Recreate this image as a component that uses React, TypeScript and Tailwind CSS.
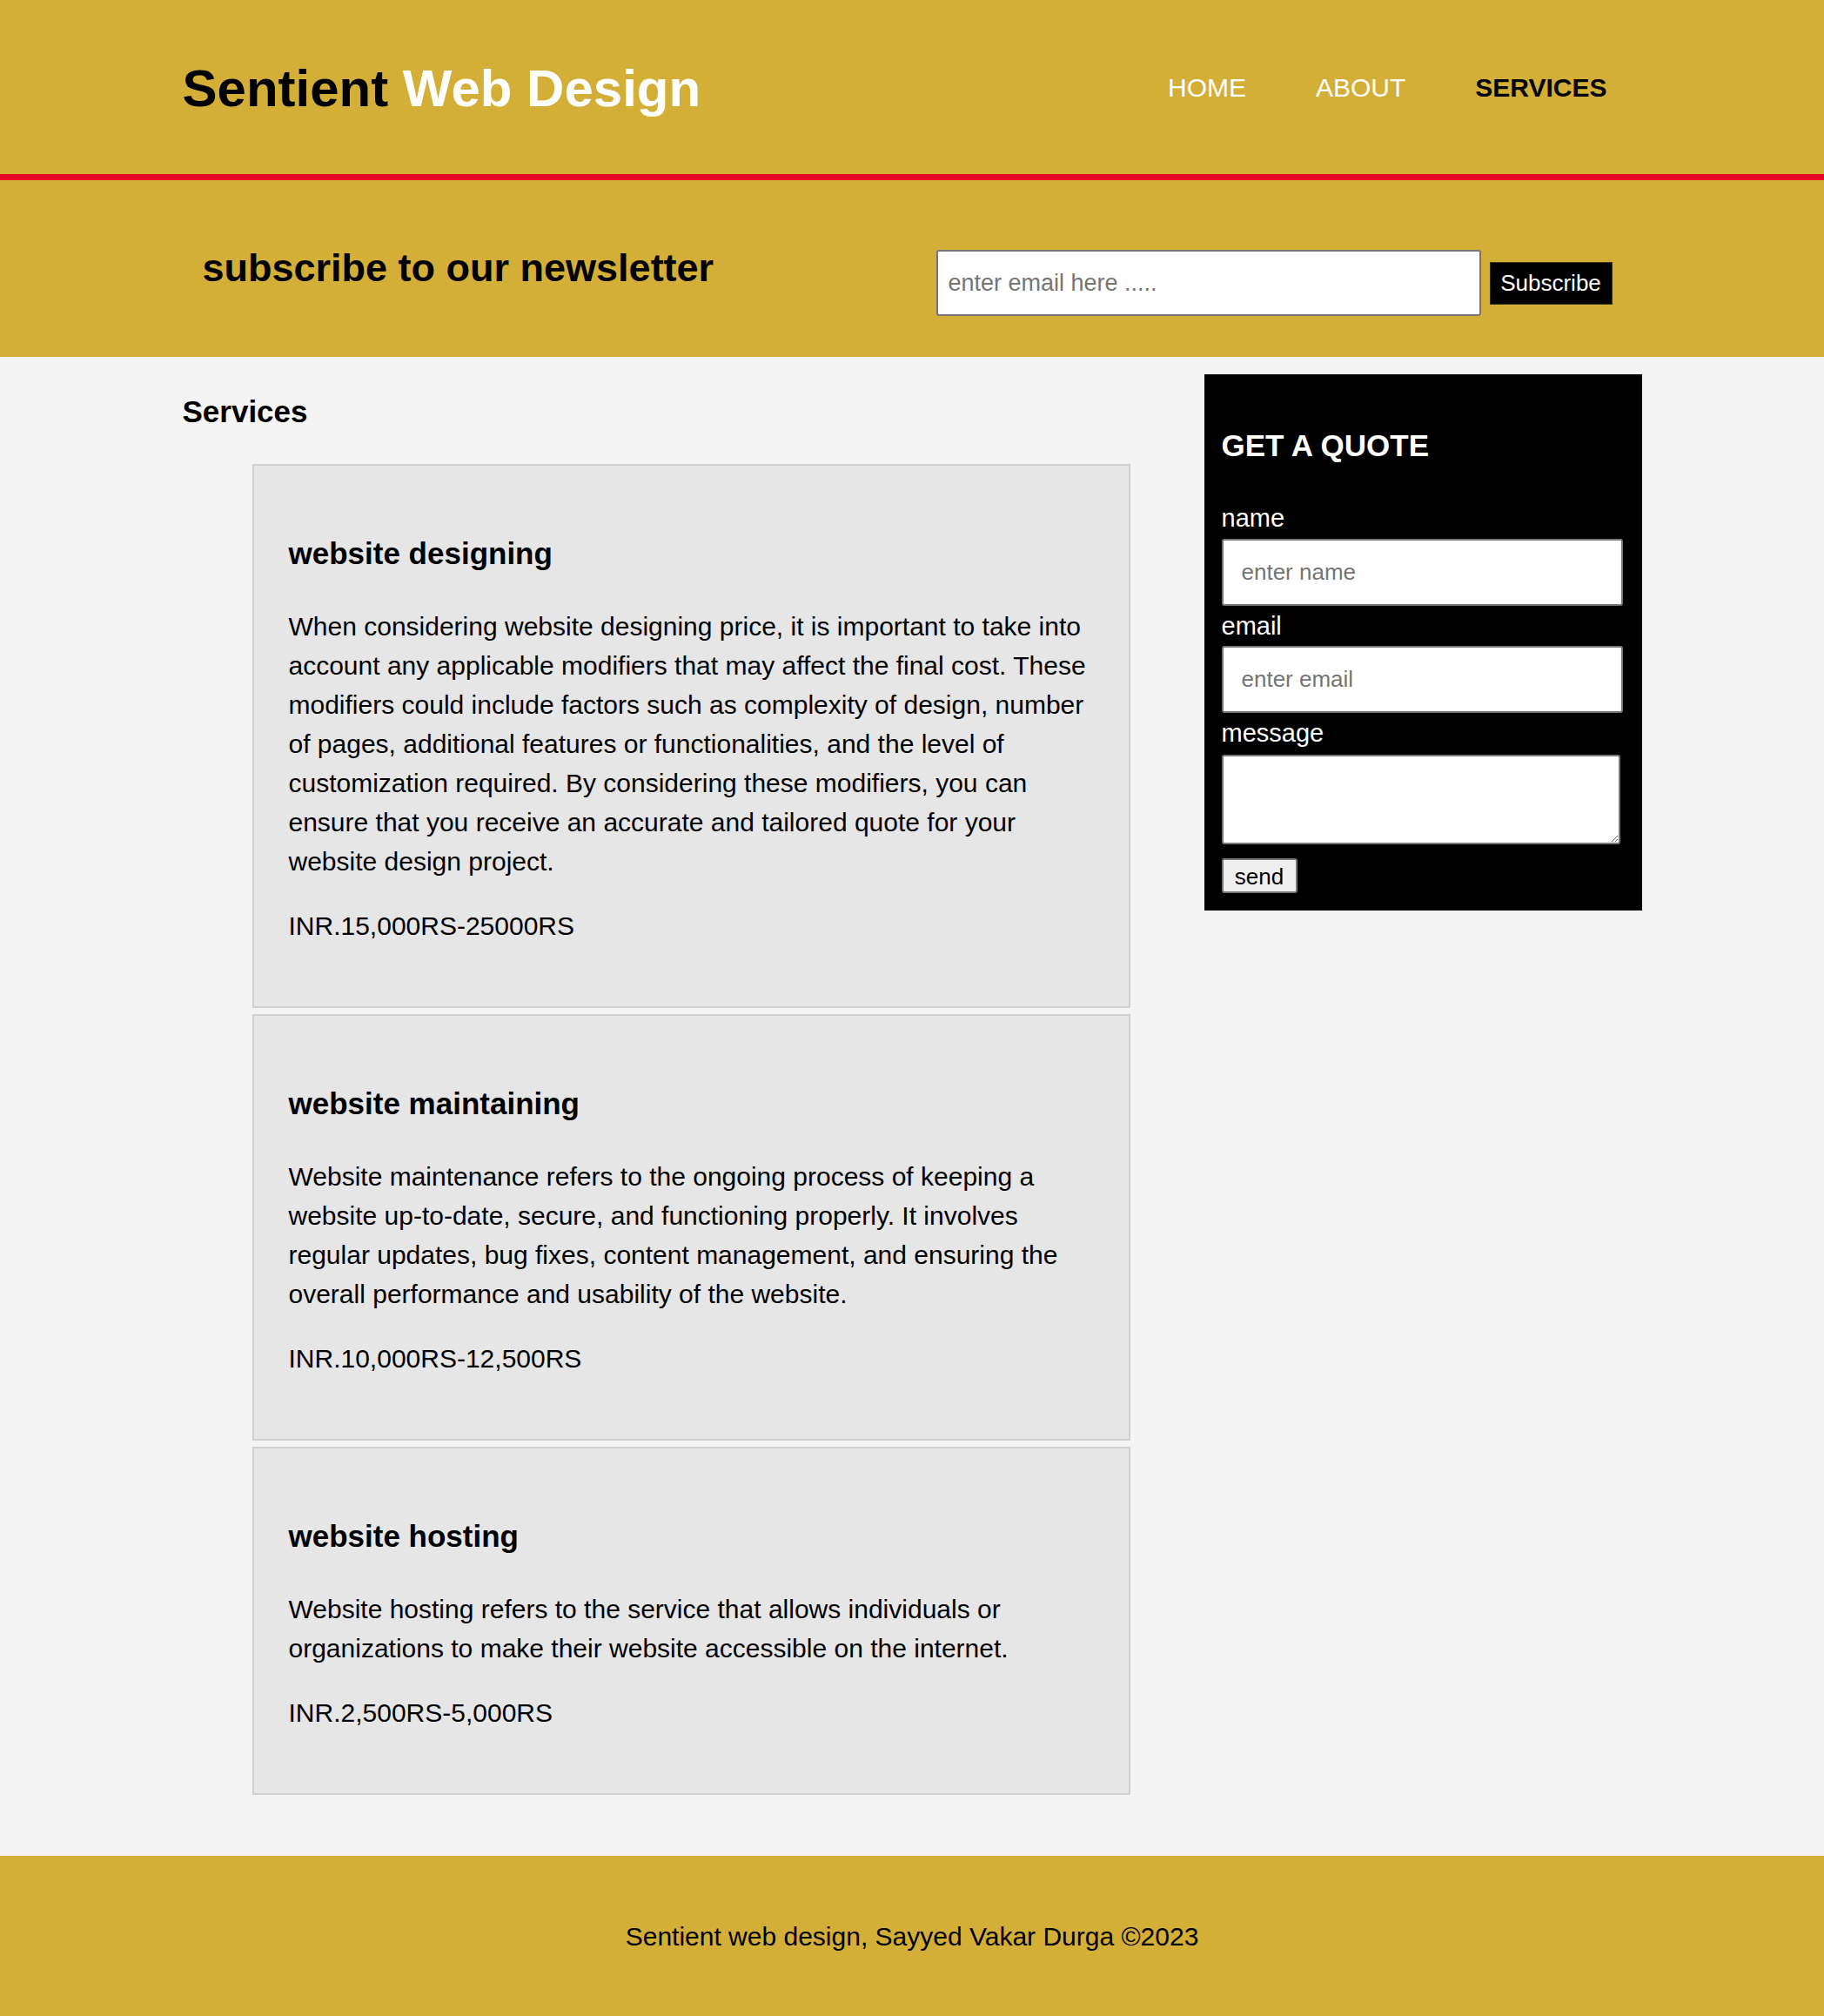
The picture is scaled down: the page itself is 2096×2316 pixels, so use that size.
import React from 'react';

const services = [
  {
    title: 'website designing',
    text: 'When considering website designing price, it is important to take into account any applicable modifiers that may affect the final cost. These modifiers could include factors such as complexity of design, number of pages, additional features or functionalities, and the level of customization required. By considering these modifiers, you can ensure that you receive an accurate and tailored quote for your website design project.',
    price: 'INR.15,000RS-25000RS',
  },
  {
    title: 'website maintaining',
    text: 'Website maintenance refers to the ongoing process of keeping a website up-to-date, secure, and functioning properly. It involves regular updates, bug fixes, content management, and ensuring the overall performance and usability of the website.',
    price: 'INR.10,000RS-12,500RS',
  },
  {
    title: 'website hosting',
    text: 'Website hosting refers to the service that allows individuals or organizations to make their website accessible on the internet.',
    price: 'INR.2,500RS-5,000RS',
  },
];

export default function App() {
  return (
    <div className="min-h-screen bg-[#f4f4f4] text-black font-['Liberation_Sans',Arial,sans-serif]">
      {/* Header */}
      <header className="bg-[#d4af37] border-b-[7px] border-[#e50024]">
        <div className="mx-auto w-[1677px] h-[200px] flex items-center justify-between">
          <h1 className="pt-[2px] text-[60px] font-bold leading-[69px]">
            Sentient <span className="text-white">Web Design</span>
          </h1>
          <nav className="flex items-center">
            <a href="#" className="px-[40px] text-[30px] text-white">HOME</a>
            <a href="#" className="px-[40px] text-[30px] text-white">ABOUT</a>
            <a href="#" className="px-[40px] text-[30px] font-bold text-black">SERVICES</a>
          </nav>
        </div>
      </header>

      {/* Newsletter */}
      <section className="bg-[#d4af37] h-[203px]">
        <div className="mx-auto w-[1677px] flex justify-between items-start pl-[23px] pr-[34px]">
          <h2 className="mt-[75px] text-[45px] leading-[52px] font-bold">subscribe to our newsletter</h2>
          <form className="mt-[80px] flex items-center gap-[10px]" onSubmit={(e) => e.preventDefault()}>
            <input
              type="email"
              placeholder="enter email here ....."
              className="w-[626px] h-[76px] bg-white border-2 border-[#767676] rounded-[3px] pl-[12px] text-[27px] placeholder:text-[#757575] outline-none"
            />
            <button className="w-[141px] h-[49px] bg-black text-white text-[26px] border border-[#3a3a1a]">
              Subscribe
            </button>
          </form>
        </div>
      </section>

      {/* Main */}
      <main className="pb-[70px]">
        <div className="mx-auto w-[1677px] flex justify-between items-start">
          <div className="w-[1090px] pt-[43px]">
            <h2 className="text-[35px] leading-[40px] font-bold">Services</h2>
            <div className="mt-[40px] ml-[80px] w-[1009px] flex flex-col gap-[7px]">
              {services.map((s) => (
                <div key={s.title} className="bg-[#e6e6e6] border-2 border-[#d0d0d0] px-[40px] pt-[81px] pb-[70px]">
                  <h3 className="text-[35px] leading-[40px] font-bold">{s.title}</h3>
                  <p className="mt-[41px] text-[30px] leading-[45px]">{s.text}</p>
                  <p className="mt-[29px] text-[30px] leading-[45px]">{s.price}</p>
                </div>
              ))}
            </div>
          </div>

          {/* Quote */}
          <aside className="mt-[20px] w-[503px] bg-black px-[20px] pb-[20px] pt-[20px] text-white">
            <h2 className="mt-[42px] text-[35px] leading-[40px] font-bold">GET A QUOTE</h2>
            <form className="mt-[47px] flex flex-col items-start" onSubmit={(e) => e.preventDefault()}>
              <label className="text-[29px] leading-[33px] mb-[7px]">name</label>
              <input
                type="text"
                placeholder="enter name"
                className="w-[461px] h-[77px] bg-white text-black border-2 border-[#767676] rounded-[3px] pl-[21px] text-[26px] placeholder:text-[#757575] outline-none"
              />
              <label className="mt-[7px] text-[29px] leading-[33px] mb-[6px]">email</label>
              <input
                type="email"
                placeholder="enter email"
                className="w-[461px] h-[77px] bg-white text-black border-2 border-[#767676] rounded-[3px] pl-[21px] text-[26px] placeholder:text-[#757575] outline-none"
              />
              <label className="mt-[7px] text-[29px] leading-[33px] mb-[8px]">message</label>
              <textarea className="w-[458px] h-[103px] bg-white text-black border-2 border-[#767676] rounded-[3px] outline-none" />
              <button className="mt-[16px] w-[87px] h-[40px] bg-[#efefef] text-black text-[26px] border-2 border-[#767676] rounded-[3px]">
                send
              </button>
            </form>
          </aside>
        </div>
      </main>

      {/* Footer */}
      <footer className="bg-[#d4af37] h-[184px] flex items-center justify-center">
        <p className="text-[30px]">Sentient web design, Sayyed Vakar Durga ©2023</p>
      </footer>
    </div>
  );
}
